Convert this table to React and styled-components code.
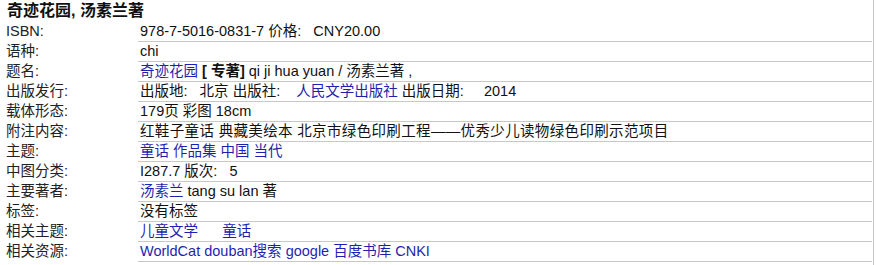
import styled, { createGlobalStyle } from 'styled-components';

const GlobalStyle = createGlobalStyle`
    html, body {
        margin: 0;
        padding: 0;
        background: #fff;
    }
    body {
        font-family: 'Liberation Sans', 'Noto Sans CJK SC', sans-serif;
        color: #111;
    }
`;

const gap = '\u00a0\u00a0';
const gapWide = '\u00a0\u00a0\u00a0\u00a0';

const rows = [
    { label: 'ISBN:', value: [{ t: `978-7-5016-0831-7 价格:${gap} CNY20.00` }] },
    { label: '语种:', value: [{ t: 'chi' }] },
    {
        label: '题名:',
        value: [
            { t: '奇迹花园', link: true },
            { t: ' [ 专著]', bold: true },
            { t: ' qi ji hua yuan / 汤素兰著 ,' },
        ],
    },
    {
        label: '出版发行:',
        value: [
            { t: `出版地:${gap} 北京 出版社:${gapWide}` },
            { t: '人民文学出版社', link: true },
            { t: ` 出版日期:${gapWide} 2014` },
        ],
    },
    { label: '载体形态:', value: [{ t: '179页 彩图 18cm' }] },
    { label: '附注内容:', value: [{ t: '红鞋子童话 典藏美绘本 北京市绿色印刷工程——优秀少儿读物绿色印刷示范项目' }], wide: true },
    { label: '主题:', value: [{ t: '童话 作品集 中国 当代', link: true }] },
    { label: '中图分类:', value: [{ t: `I287.7 版次:${gap} 5` }] },
    {
        label: '主要著者:',
        value: [{ t: '汤素兰', link: true }, { t: ' tang su lan 著' }],
    },
    { label: '标签:', value: [{ t: '没有标签' }] },
    {
        label: '相关主题:',
        value: [{ t: '儿童文学', link: true }, { t: '\u00a0\u00a0\u00a0\u00a0\u00a0 ' }, { t: '童话', link: true }],
    },
    {
        label: '相关资源:',
        value: [
            { t: 'WorldCat', link: true },
            { t: ' ' },
            { t: 'douban搜索', link: true },
            { t: ' ' },
            { t: 'google', link: true },
            { t: ' ' },
            { t: '百度书库', link: true },
            { t: ' ' },
            { t: 'CNKI', link: true },
        ],
    },
];

const App = () => {
    return (
        <Wrapper>
            <GlobalStyle />
            <Title>奇迹花园, 汤素兰著</Title>
            <Table>
                {rows.map((row) => (
                    <Row key={row.label}>
                        <Label>{row.label}</Label>
                        <Value $wide={row.wide}>
                            {row.value.map((part, i) =>
                                part.link ? (
                                    <A key={i} href="#">
                                        {part.t}
                                    </A>
                                ) : part.bold ? (
                                    <B key={i}>{part.t}</B>
                                ) : (
                                    <span key={i}>{part.t}</span>
                                )
                            )}
                        </Value>
                    </Row>
                ))}
            </Table>
        </Wrapper>
    );
};

const Wrapper = styled.div`
    width: 874px;
    height: 265px;
    border-right: 1px solid #c8c8c8;
    box-sizing: border-box;
    overflow: hidden;
`;

const Title = styled.h2`
    margin: 0;
    height: 22px;
    padding-left: 7px;
    font-size: 16px;
    line-height: 21px;
    font-weight: bold;
    color: #111;
`;

const Table = styled.div`
    display: flex;
    flex-direction: column;
    margin-right: 1px;
`;

const Row = styled.div`
    display: grid;
    grid-template-columns: 138px 1fr;
    height: 20px;
    font-size: 14.5px;
`;

const Label = styled.div`
    padding-left: 6px;
    line-height: 19px;
    color: #222;
    white-space: nowrap;
`;

const Value = styled.div`
    padding-left: 2px;
    line-height: 19px;
    border-bottom: 1px solid #c8c8c8;
    white-space: pre;
    letter-spacing: ${(p) => (p.$wide ? '0.35px' : 'normal')};
`;

const A = styled.a`
    color: #1f1fb0;
    text-decoration: none;
`;

const B = styled.b`
    font-weight: bold;
    color: #111;
`;

export default App;
